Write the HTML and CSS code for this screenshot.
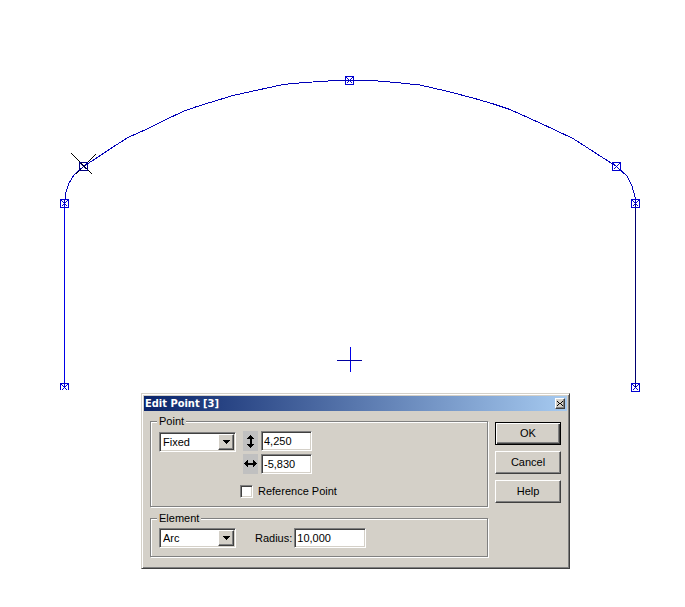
FILE: index.html
```html
<!DOCTYPE html>
<html lang="en">
<head>
<meta charset="utf-8">
<title>Edit Point</title>
<link rel="stylesheet" href="styles.css">
</head>
<body>
<main class="workspace">
  <svg class="drawing" viewBox="0 0 685 607" role="img" aria-label="Profile outline">
    <defs>
      <g id="node">
        <rect x="-4" y="-4" width="8" height="8"/>
        <path d="M-3 -3L3 3M3 -3L-3 3"/>
      </g>
      <clipPath id="cut"><rect x="55" y="375" width="20" height="15"/></clipPath>
    </defs>
    <g class="outline">
      <path class="bright" d="M64.500 387V203.500"/>
      <path d="M64.500 203.500L65.500 194L68.500 184L74 175L83.500 166.500L120 142.500L128 137.500L147 129L165 120L183 111.500L197 106.500L215 101L233 95.500L258 90L283 84.500L305 82.500L328 81L350 80.500L372 80.500L396 82.500L420 85L446 91L473 98L492 103.500L510 109.500L540 123L573 138.500L616.500 166.500L627 176L632 186L635 197L635.500 203.500"/>
      <path class="shade" d="M635.500 203V387"/>
    </g>
    <g class="selected"><path d="M71.500 153.500L92 174M96 154L76 174"/></g>
    <g class="nodes">
      <use href="#node" x="64.500" y="203.500"/>
      <use href="#node" class="active" x="83.500" y="166.500"/>
      <use href="#node" x="349.500" y="80.500"/>
      <use href="#node" x="616.500" y="166.500"/>
      <use href="#node" x="635.500" y="203.500"/>
      <use href="#node" x="635.500" y="387.500"/>
      <g clip-path="url(#cut)"><use href="#node" x="64.500" y="387.500"/></g>
    </g>
    <path class="bright" d="M350.500 347V372"/>
    <path class="cross" d="M337 360.500H362"/>
  </svg>

  <form class="dialog" aria-labelledby="title">
    <header class="titlebar">
      <h1 id="title">Edit Point [3]</h1>
      <button type="button" class="close" aria-label="Close">
        <svg viewBox="0 0 6 5"><path d="M0 0h1v1h1v1h2v-1h1v-1h1v1h-1v1h-1v1h1v1h1v1h-1v-1h-1v-1h-2v1h-1v1h-1v-1h1v-1h1v-1h-1v-1h-1z"/></svg>
      </button>
    </header>
    <div class="content">
      <div class="groups">
        <fieldset class="group point">
          <legend>Point</legend>
          <div class="combo">
            <select aria-label="Point type"><option>Fixed</option></select>
            <span class="drop"><svg viewBox="0 0 7 4"><path d="M0 0h7v1h-1v1h-1v1h-1v1h-1v-1h-1v-1h-1v-1h-1z"/></svg></span>
          </div>
          <div class="values">
            <div class="coords">
              <label class="axis" for="vertical" aria-label="Vertical"><svg viewBox="0 0 15 20"><path d="M7 4h1v1h1v1h1v1h1v1h-2v5h2v1h-1v1h-1v1h-1v1h-1v-1h-1v-1h-1v-1h-1v-1h3v-5h-3v-1h1v-1h1v-1h1z"/></svg></label>
              <input class="field" id="vertical" type="text" value="4,250">
              <label class="axis" for="horizontal" aria-label="Horizontal"><svg viewBox="0 0 15 20"><path d="M1 9h1v-1h1v-1h1v-1h1v3h5v-3h1v1h1v1h1v1h1v1h-1v1h-1v1h-1v1h-1v-2h-5v2h-1v-1h-1v-1h-1v-1h-1z"/></svg></label>
              <input class="field" id="horizontal" type="text" value="-5,830">
            </div>
            <label class="check"><input type="checkbox">Reference Point</label>
          </div>
        </fieldset>
        <fieldset class="group element">
          <legend>Element</legend>
          <div class="combo">
            <select aria-label="Element type"><option>Arc</option></select>
            <span class="drop"><svg viewBox="0 0 7 4"><path d="M0 0h7v1h-1v1h-1v1h-1v1h-1v-1h-1v-1h-1v-1h-1z"/></svg></span>
          </div>
          <label class="radius" for="radius">Radius:</label>
          <input class="field wide" id="radius" type="text" value="10,000">
        </fieldset>
      </div>
      <div class="actions">
        <button type="submit" class="default">OK</button>
        <button type="button">Cancel</button>
        <button type="button">Help</button>
      </div>
    </div>
  </form>
</main>
</body>
</html>
```

FILE: styles.css
```css
* {
  box-sizing: border-box;
}

body {
  margin: 0;
  background: #fff;
  color: #000;
  font: 11px/13px "Liberation Sans", Arial, sans-serif;
}

.workspace {
  position: relative;
}

.drawing {
  display: block;
  width: 100%;
  height: auto;
  fill: none;
  stroke: #0000d0;
  shape-rendering: crispEdges;
}

.outline {
  stroke: #0000b8;
}

.bright {
  stroke: #0000e8;
}

.cross {
  stroke: #0000a0;
}

.shade {
  stroke: #000070;
}

.selected {
  stroke: #000;
}

.active {
  stroke: #000080;
}

.dialog {
  position: absolute;
  left: 141px;
  top: 393px;
  padding: 1px;
  background: #d4d0c8;
  border: 1px solid;
  border-color: #d4d0c8 #404040 #404040 #d4d0c8;
  box-shadow: inset 1px 1px #fff, inset -1px -1px #808080;
}

.titlebar {
  display: flex;
  align-items: center;
  justify-content: space-between;
  height: 15px;
  margin: 1px 1px 0;
  padding: 0 2px 0 1px;
  background: linear-gradient(to right, #0a246a, #a6caf0);
}

.titlebar h1 {
  margin: 0;
  color: #fff;
  font: bold 11px/15px "DejaVu Sans Condensed", Tahoma, sans-serif;
}

button {
  padding: 0;
  background: #d4d0c8;
  border: 1px solid;
  border-color: #fff #404040 #404040 #fff;
  box-shadow: inset -1px -1px #808080;
  color: inherit;
  font: inherit;
}

.close {
  display: flex;
  align-items: center;
  justify-content: center;
  width: 10px;
  height: 11px;
}

.close svg {
  width: 6px;
  height: 5px;
  shape-rendering: crispEdges;
}

.content {
  display: flex;
  gap: 6px;
  padding: 4px 7px 10px;
}

.groups {
  display: flex;
  flex-direction: column;
  gap: 5px;
}

.group {
  display: flex;
  align-items: flex-start;
  min-width: 338px;
  margin: 0 1px 0 0;
  padding: 3px 8px 8px;
  border: 1px solid #808080;
  box-shadow: 1px 1px #fff, inset 1px 1px #fff;
}

legend {
  margin-left: -2px;
  padding: 0 2px;
  background: #d4d0c8;
}

.combo {
  position: relative;
  width: 77px;
}

.point .combo {
  margin-top: 1px;
}

.combo select {
  display: block;
  width: 100%;
  height: 20px;
  padding: 0 18px 0 3px;
  appearance: none;
}

.combo select,
.field {
  background: #fff;
  border: 1px solid;
  border-color: #808080 #fff #fff #808080;
  border-radius: 0;
  box-shadow: inset 1px 1px #404040, inset -1px -1px #d4d0c8;
  color: inherit;
  font: inherit;
}

.drop {
  position: absolute;
  top: 2px;
  right: 2px;
  display: flex;
  align-items: center;
  justify-content: center;
  width: 16px;
  height: 16px;
  background: #d4d0c8;
  border: 1px solid;
  border-color: #fff #404040 #404040 #fff;
  box-shadow: inset -1px -1px #808080;
  pointer-events: none;
}

.drop svg {
  width: 7px;
  height: 4px;
  shape-rendering: crispEdges;
}

.field {
  width: 51px;
  height: 20px;
  padding: 0 2px 1px;
}

.wide {
  width: 72px;
}

.values {
  margin-left: 4px;
}

.coords {
  display: grid;
  grid-template-columns: 15px auto;
  gap: 3px;
  margin-left: 3px;
}

.axis {
  height: 20px;
  background: #c0c0c0;
}

.axis svg {
  display: block;
  width: 15px;
  height: 20px;
  shape-rendering: crispEdges;
}

.check {
  display: flex;
  align-items: center;
  gap: 5px;
  margin-top: 11px;
}

.check input {
  width: 13px;
  height: 13px;
  margin: 0;
  appearance: none;
  background: #fff;
  border: 1px solid;
  border-color: #808080 #fff #fff #808080;
  box-shadow: inset 1px 1px #404040, inset -1px -1px #d4d0c8;
}

.radius {
  margin: 4px 2px 0 19px;
}

.actions {
  display: flex;
  flex-direction: column;
  gap: 6px;
  padding-top: 7px;
}

.actions button {
  width: 66px;
  height: 23px;
}

.actions .default {
  border-color: #000;
  box-shadow: inset 1px 1px #fff, inset -1px -1px #404040, inset -2px -2px #808080;
}
```
